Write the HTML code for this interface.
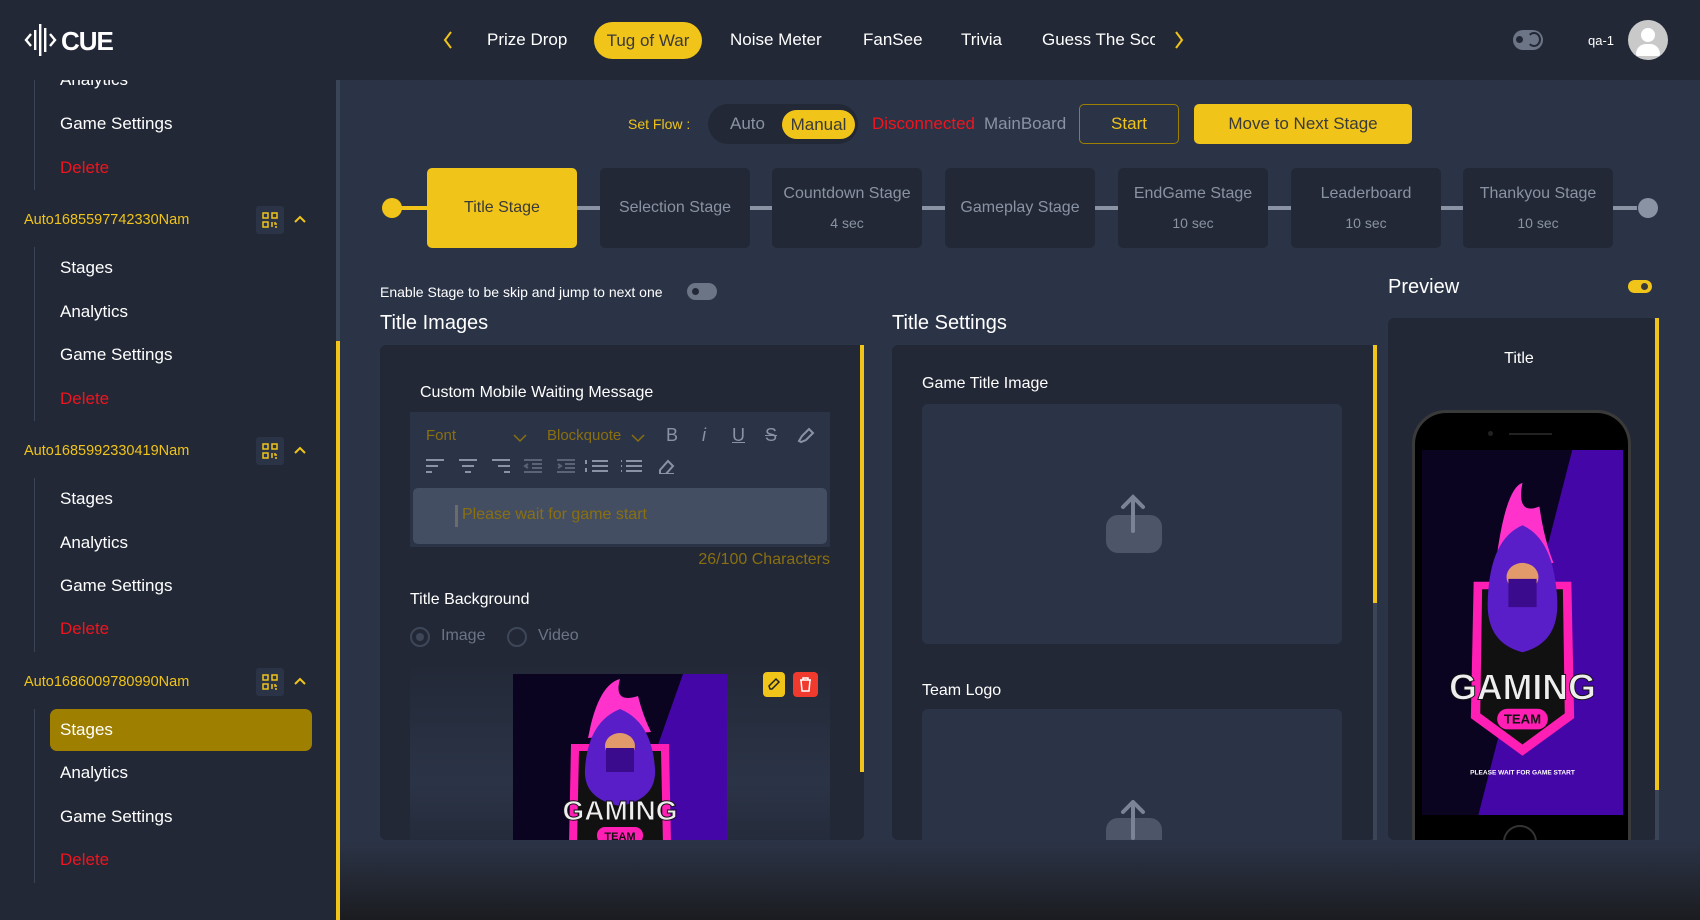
<!DOCTYPE html>
<html><head><meta charset="utf-8"><style>
*{box-sizing:border-box;margin:0;padding:0}
html,body{overflow:hidden}
body{width:1700px;height:920px;background:#2b3447;font-family:"Liberation Sans",sans-serif;color:#fff;position:relative}
.a{position:absolute;white-space:nowrap}
.hdr{left:0;top:0;width:1700px;height:80px;background:#222836}
.side{left:0;top:80px;width:336px;height:840px;background:#222836;overflow:hidden}
.it{position:absolute;left:60px;font-size:17px;color:#fff}
.del{color:#f0141e}
.auto{position:absolute;left:24px;font-size:14.5px;color:#f0c419}
.qr{position:absolute;left:256px;width:28px;height:28px;background:#2b3447;border-radius:3px}
.vl{position:absolute;left:34px;width:1px;background:#3b4558}
.stg{position:absolute;top:168px;width:150px;height:80px;background:#222836;border-radius:5px;color:#8a93a3;font-size:16px;text-align:center}
.ln{position:absolute;top:206px;height:4px;background:#8a93a3}
.panel{background:#222836;border-radius:6px}
.tb{fill:none;stroke:#8a93a3;stroke-width:2}
</style></head><body>
<div class="a hdr"></div>
<svg class="a" style="left:24px;top:22px" width="110" height="36" viewBox="0 0 110 36">
<path d="M7 12 L2 18 L7 24" stroke="#fff" stroke-width="2.4" fill="none"/>
<rect x="10" y="8" width="2.4" height="20" fill="#fff"/><rect x="15" y="2" width="2.4" height="32" fill="#fff"/><rect x="20" y="6" width="2.4" height="24" fill="#fff"/>
<path d="M26 12 L31 18 L26 24" stroke="#fff" stroke-width="2.4" fill="none"/>
<text x="37" y="28" font-family="Liberation Sans" font-weight="bold" font-size="26" fill="#fff" letter-spacing="-1">CUE</text></svg>
<svg class="a" style="left:442px;top:30px" width="12" height="20"><path d="M9 2 L3 10 L9 18" stroke="#f0c419" stroke-width="2" fill="none"/></svg>
<div class="a" style="left:487px;top:30px;font-size:17px">Prize Drop</div>
<div class="a" style="left:594px;top:22px;width:108px;height:37px;background:#f0c419;border-radius:19px;color:#3a3a3a;font-size:17px;text-align:center;line-height:37px">Tug of War</div>
<div class="a" style="left:730px;top:30px;font-size:17px">Noise Meter</div>
<div class="a" style="left:863px;top:30px;font-size:17px">FanSee</div>
<div class="a" style="left:961px;top:30px;font-size:17px">Trivia</div>
<div class="a" style="left:1042px;top:30px;font-size:17px;width:113px;overflow:hidden">Guess The Score</div>
<svg class="a" style="left:1173px;top:30px" width="12" height="20"><path d="M3 2 L9 10 L3 18" stroke="#f0c419" stroke-width="2" fill="none"/></svg>
<div class="a" style="left:1513px;top:30px;width:30px;height:20px;background:#6c7585;border-radius:10px"></div>
<div class="a" style="left:1516px;top:36px;width:7px;height:7px;background:#222836;border-radius:50%"></div>
<div class="a" style="left:1527px;top:32px;width:14px;height:15px;border-radius:50%;border:2px solid #222836;border-left-color:transparent"></div>
<div class="a" style="left:1588px;top:33px;font-size:13px">qa-1</div>
<div class="a" style="left:1628px;top:20px;width:40px;height:40px;border-radius:50%;background:#c9c9c9;overflow:hidden"><div class="a" style="left:13px;top:8px;width:14px;height:14px;border-radius:50%;background:#fff"></div><div class="a" style="left:8px;top:24px;width:24px;height:12px;border-radius:10px 10px 2px 2px;background:#fff"></div></div>

<div class="a side">
<div class="vl" style="top:0;height:110px"></div>
<div class="it" style="top:-10px">Analytics</div>
<div class="it" style="top:34px">Game Settings</div>
<div class="it del" style="top:78px">Delete</div>
<div class="auto" style="top:132px">Auto1685597742330Nam</div>
<div class="qr" style="top:126px"></div>
<div class="vl" style="top:167px;height:174px"></div>
<div class="it" style="top:178px">Stages</div><div class="it" style="top:222px">Analytics</div><div class="it" style="top:265px">Game Settings</div><div class="it del" style="top:309px">Delete</div>
<div class="auto" style="top:363px">Auto1685992330419Nam</div>
<div class="qr" style="top:357px"></div>
<div class="vl" style="top:398px;height:174px"></div>
<div class="it" style="top:409px">Stages</div><div class="it" style="top:453px">Analytics</div><div class="it" style="top:496px">Game Settings</div><div class="it del" style="top:539px">Delete</div>
<div class="auto" style="top:594px">Auto1686009780990Nam</div>
<div class="qr" style="top:588px"></div>
<div class="vl" style="top:629px;height:174px"></div>
<div class="a" style="left:50px;top:629px;width:262px;height:42px;background:#9e7f00;border-radius:7px"></div>
<div class="it" style="top:640px">Stages</div><div class="it" style="top:683px">Analytics</div><div class="it" style="top:727px">Game Settings</div><div class="it del" style="top:770px">Delete</div>
</div>
<svg class="a" style="left:262px;top:212px" width="16" height="16" viewBox="0 0 16 16"><g fill="none" stroke="#f0c419" stroke-width="1.5"><rect x="1" y="1" width="5" height="5"/><rect x="10" y="1" width="5" height="5"/><rect x="1" y="10" width="5" height="5"/><path d="M10 10v5M13 10v2h2M13 15h2"/></g></svg>
<svg class="a" style="left:262px;top:443px" width="16" height="16" viewBox="0 0 16 16"><g fill="none" stroke="#f0c419" stroke-width="1.5"><rect x="1" y="1" width="5" height="5"/><rect x="10" y="1" width="5" height="5"/><rect x="1" y="10" width="5" height="5"/><path d="M10 10v5M13 10v2h2M13 15h2"/></g></svg>
<svg class="a" style="left:262px;top:674px" width="16" height="16" viewBox="0 0 16 16"><g fill="none" stroke="#f0c419" stroke-width="1.5"><rect x="1" y="1" width="5" height="5"/><rect x="10" y="1" width="5" height="5"/><rect x="1" y="10" width="5" height="5"/><path d="M10 10v5M13 10v2h2M13 15h2"/></g></svg>
<svg class="a" style="left:293px;top:214px" width="14" height="10"><path d="M2 8 L7 3 L12 8" stroke="#f0c419" stroke-width="2" fill="none"/></svg>
<svg class="a" style="left:293px;top:445px" width="14" height="10"><path d="M2 8 L7 3 L12 8" stroke="#f0c419" stroke-width="2" fill="none"/></svg>
<svg class="a" style="left:293px;top:676px" width="14" height="10"><path d="M2 8 L7 3 L12 8" stroke="#f0c419" stroke-width="2" fill="none"/></svg>
<div class="a" style="left:336px;top:80px;width:4px;height:840px;background:#3b4558"></div>
<div class="a" style="left:336px;top:341px;width:4px;height:579px;background:#f0c419"></div>

<div class="a" style="left:628px;top:116px;font-size:14px;color:#f0c419">Set Flow :</div>
<div class="a" style="left:708px;top:104px;width:150px;height:40px;background:#222836;border-radius:20px"></div>
<div class="a" style="left:730px;top:114px;font-size:17px;color:#8a93a3">Auto</div>
<div class="a" style="left:782px;top:110px;width:73px;height:29px;background:#f0c419;border-radius:15px;color:#3a3a3a;font-size:17px;text-align:center;line-height:29px">Manual</div>
<div class="a" style="left:872px;top:114px;font-size:17px;color:#f0141e">Disconnected</div>
<div class="a" style="left:984px;top:114px;font-size:17px;color:#8a93a3">MainBoard</div>
<div class="a" style="left:1079px;top:104px;width:100px;height:40px;border:1px solid #9e7f00;border-radius:5px;color:#f0c419;font-size:17px;text-align:center;line-height:38px">Start</div>
<div class="a" style="left:1194px;top:104px;width:218px;height:40px;background:#f0c419;border-radius:5px;color:#3a3a3a;font-size:17px;text-align:center;line-height:40px">Move to Next Stage</div>

<div class="a" style="left:382px;top:198px;width:20px;height:20px;border-radius:50%;background:#f0c419"></div>
<div class="ln" style="left:400px;width:28px;background:#f0c419"></div>
<div class="ln" style="left:577px;width:1060px"></div>
<div class="a" style="left:1638px;top:198px;width:20px;height:20px;border-radius:50%;background:#8a93a3"></div>
<div class="stg" style="left:427px;background:#f0c419;color:#3a3a3a;line-height:80px">Title Stage</div>
<div class="stg" style="left:600px;line-height:80px">Selection Stage</div>
<div class="stg" style="left:772px;padding-top:17px">Countdown Stage<div style="font-size:14px;margin-top:12px">4 sec</div></div>
<div class="stg" style="left:945px;line-height:80px">Gameplay Stage</div>
<div class="stg" style="left:1118px;padding-top:17px">EndGame Stage<div style="font-size:14px;margin-top:12px">10 sec</div></div>
<div class="stg" style="left:1291px;padding-top:17px">Leaderboard<div style="font-size:14px;margin-top:12px">10 sec</div></div>
<div class="stg" style="left:1463px;padding-top:17px">Thankyou Stage<div style="font-size:14px;margin-top:12px">10 sec</div></div>

<div class="a" style="left:380px;top:284px;font-size:14px">Enable Stage to be skip and jump to next one</div>
<div class="a" style="left:687px;top:283px;width:30px;height:17px;background:#6c7585;border-radius:9px"><div class="a" style="left:5px;top:5px;width:7px;height:7px;border-radius:50%;background:#222836"></div></div>
<div class="a" style="left:380px;top:312px;font-size:20px">Title Images</div>
<div class="a" style="left:892px;top:312px;font-size:20px">Title Settings</div>
<div class="a" style="left:1388px;top:276px;font-size:20px">Preview</div>
<div class="a" style="left:1628px;top:280px;width:24px;height:13px;background:#f0c419;border-radius:7px"><div class="a" style="left:13px;top:3px;width:7px;height:7px;border-radius:50%;background:#3a3a3a"></div></div>

<div class="a panel" style="left:380px;top:345px;width:484px;height:495px;overflow:hidden">
<div class="a" style="left:40px;top:39px;font-size:16px">Custom Mobile Waiting Message</div>
<div class="a" style="left:30px;top:67px;width:420px;height:135px;background:#2b3447"></div>
<div class="a" style="left:46px;top:82px;font-size:15px;color:#8a6f10">Font</div>
<svg class="a" style="left:133px;top:88px" width="14" height="10"><path d="M1 2 L7 8 L13 2" stroke="#8a6f10" stroke-width="1.5" fill="none"/></svg>
<div class="a" style="left:167px;top:82px;font-size:15px;color:#8a6f10">Blockquote</div>
<svg class="a" style="left:251px;top:88px" width="14" height="10"><path d="M1 2 L7 8 L13 2" stroke="#8a6f10" stroke-width="1.5" fill="none"/></svg>
<div class="a" style="left:286px;top:80px;font-size:18px;color:#8a93a3">B</div>
<div class="a" style="left:322px;top:80px;font-size:18px;color:#8a93a3;font-style:italic">i</div>
<div class="a" style="left:352px;top:80px;font-size:18px;color:#8a93a3;text-decoration:underline">U</div>
<div class="a" style="left:385px;top:80px;font-size:18px;color:#8a93a3;text-decoration:line-through">S</div>
<svg class="a" style="left:416px;top:81px" width="20" height="18"><path class="tb" d="M3 15 L6 10 L13 3 L17 7 L10 14 L5 16 Z"/></svg>
<svg class="a" style="left:44px;top:113px" width="290" height="16"><g class="tb">
<path d="M2 2h18M2 8h12M2 14h6"/><path d="M35 2h18M38 8h12M41 14h6"/><path d="M68 2h18M74 8h12M80 14h6"/>
<path d="M100 2h18M108 6h10M108 10h10M100 14h18M104 6l-3 2 3 2" opacity=".5"/><path d="M133 2h18M141 6h10M141 10h10M133 14h18M134 6l3 2-3 2" opacity=".5"/>
<path d="M168 3h16M168 8h16M168 13h16M162 2v4M162 10v4"/><path d="M202 3h16M202 8h16M202 13h16M197 3h1M197 8h1M197 13h1"/>
<path d="M236 12l8-9 5 5-8 9h-5zM236 16h14"/></g></svg>
<div class="a" style="left:33px;top:143px;width:414px;height:56px;background:#434e63;border-radius:5px"></div>
<div class="a" style="left:75px;top:160px;width:3px;height:22px;background:#6c6c6c"></div>
<div class="a" style="left:82px;top:161px;font-size:16px;color:#8a6f10">Please wait for game start</div>
<div class="a" style="left:270px;top:206px;width:180px;text-align:right;font-size:16px;color:#8a6f10">26/100 Characters</div>
<div class="a" style="left:30px;top:246px;font-size:16px">Title Background</div>
<div class="a" style="left:30px;top:282px;width:20px;height:20px;border-radius:50%;border:2px solid #3e4758"></div>
<div class="a" style="left:36px;top:288px;width:8px;height:8px;border-radius:50%;background:#3e4758"></div>
<div class="a" style="left:61px;top:282px;font-size:16px;color:#6c7585">Image</div>
<div class="a" style="left:127px;top:282px;width:20px;height:20px;border-radius:50%;border:2px solid #3e4758"></div>
<div class="a" style="left:158px;top:282px;font-size:16px;color:#6c7585">Video</div>
<div class="a" style="left:30px;top:317px;width:420px;height:200px;border-radius:8px;background:linear-gradient(#222836,#2b3447 60%,#222836)"></div>
<svg class="a" style="left:133px;top:329px" width="214" height="170" viewBox="0 0 214 170">
<rect width="214" height="170" fill="#0a0420"/><path d="M170 0H214V170H110Z" fill="#4506a8"/>
<path d="M78 50 Q88 10 107 5 Q100 30 125 22 Q130 42 138 58 L75 64Z" fill="#ff33cc"/>
<path d="M58 70 L156 70 L158 170 L56 170Z" fill="#ff1fb4"/><path d="M66 77 L148 77 L150 170 L64 170Z" fill="#111"/>
<path d="M107 35 Q75 48 72 95 Q70 125 107 132 Q144 125 142 95 Q139 48 107 35Z" fill="#5a1ec8"/>
<ellipse cx="107" cy="72" rx="15" ry="13" fill="#e39a6a"/><rect x="93" y="74" width="28" height="24" fill="#3a0b8c"/>
<text x="107" y="146" text-anchor="middle" font-family="Liberation Sans" font-weight="bold" font-size="28" fill="#eee" stroke="#111" stroke-width="1">GAMING</text>
<rect x="84" y="153" width="46" height="17" rx="8" fill="#ff1fb4"/><text x="107" y="166" text-anchor="middle" font-family="Liberation Sans" font-weight="bold" font-size="11" fill="#111">TEAM</text></svg>
<div class="a" style="left:383px;top:327px;width:22px;height:25px;background:#f0c419;border-radius:4px"></div>
<svg class="a" style="left:386px;top:331px" width="16" height="16"><path d="M4 13 L3 10 L10 3 L13 6 L6 13Z" fill="none" stroke="#222" stroke-width="1.5"/></svg>
<div class="a" style="left:413px;top:327px;width:25px;height:25px;background:#f03a2e;border-radius:4px"></div>
<svg class="a" style="left:417px;top:331px" width="17" height="17"><path d="M3 4h11M6 4V2h5v2M4 4l1 11h7l1-11" fill="none" stroke="#fff" stroke-width="1.5"/></svg>
</div>
<div class="a" style="left:860px;top:345px;width:4px;height:427px;background:#f0c419"></div>

<div class="a panel" style="left:892px;top:345px;width:483px;height:495px;overflow:hidden">
<div class="a" style="left:30px;top:30px;font-size:16px">Game Title Image</div>
<div class="a" style="left:30px;top:59px;width:420px;height:240px;background:#2b3447;border-radius:6px"></div>
<div class="a" style="left:30px;top:337px;font-size:16px">Team Logo</div>
<div class="a" style="left:30px;top:364px;width:420px;height:240px;background:#2b3447;border-radius:6px"></div>
</div>
<svg class="a" style="left:1104px;top:493px" width="58" height="60"><rect x="2" y="22" width="56" height="38" rx="12" fill="#4d5668"/><path d="M29 38 V5 M19 14 L29 4 L39 14" stroke="#7a8496" stroke-width="4" fill="none" stroke-linecap="round"/></svg>
<svg class="a" style="left:1104px;top:800px" width="58" height="40"><rect x="2" y="18" width="56" height="38" rx="12" fill="#4d5668"/><path d="M29 38 V3 M19 12 L29 2 L39 12" stroke="#7a8496" stroke-width="4" fill="none" stroke-linecap="round"/></svg>
<div class="a" style="left:1373px;top:345px;width:4px;height:495px;background:#3b4558"></div>
<div class="a" style="left:1373px;top:345px;width:4px;height:258px;background:#f0c419"></div>

<div class="a panel" style="left:1388px;top:318px;width:269px;height:522px;overflow:hidden">
<div class="a" style="left:0;top:32px;width:262px;text-align:center;font-size:16px">Title</div>
<div class="a" style="left:24px;top:92px;width:219px;height:460px;background:#000;border-radius:34px 34px 0 0;border:3px solid #3a3a3a;border-bottom:none"></div>
<div class="a" style="left:121px;top:115px;width:43px;height:2px;background:#222"></div>
<div class="a" style="left:100px;top:113px;width:5px;height:5px;border-radius:50%;background:#222"></div>
<div class="a" style="left:115px;top:507px;width:34px;height:34px;border-radius:50%;border:2px solid #333"></div>
<svg class="a" style="left:34px;top:132px" width="201" height="365" viewBox="0 0 214 388" preserveAspectRatio="none">
<rect width="214" height="388" fill="#0a0420"/><path d="M160 0H214V388H60Z" fill="#4506a8"/>
<path d="M80 110 Q90 40 107 35 Q100 70 125 60 Q130 95 140 120 L75 130Z" fill="#ff33cc"/>
<path d="M55 140 L159 140 L162 285 L107 325 L52 285Z" fill="#ff1fb4"/><path d="M64 148 L150 148 L152 280 L107 313 L62 280Z" fill="#111"/>
<path d="M107 80 Q72 95 70 160 Q68 205 107 215 Q146 205 144 160 Q141 95 107 80Z" fill="#5a1ec8"/>
<ellipse cx="107" cy="135" rx="17" ry="15" fill="#e39a6a"/><rect x="92" y="137" width="30" height="30" fill="#3a0b8c"/>
<text x="107" y="265" text-anchor="middle" font-family="Liberation Sans" font-weight="bold" font-size="38" fill="#eee" stroke="#111" stroke-width="1">GAMING</text>
<rect x="80" y="275" width="54" height="22" rx="11" fill="#ff1fb4"/><text x="107" y="291" text-anchor="middle" font-family="Liberation Sans" font-weight="bold" font-size="14" fill="#111">TEAM</text>
<text x="107" y="345" text-anchor="middle" font-family="Liberation Sans" font-weight="bold" font-size="7" fill="#fff">PLEASE WAIT FOR GAME START</text></svg>
</div>
<div class="a" style="left:1655px;top:318px;width:4px;height:522px;background:#3b4558"></div>
<div class="a" style="left:1655px;top:318px;width:4px;height:472px;background:#f0c419"></div>

<div class="a" style="left:340px;top:840px;width:1360px;height:80px;background:linear-gradient(#2b3447,#1b1c20)"></div>
</body></html>
